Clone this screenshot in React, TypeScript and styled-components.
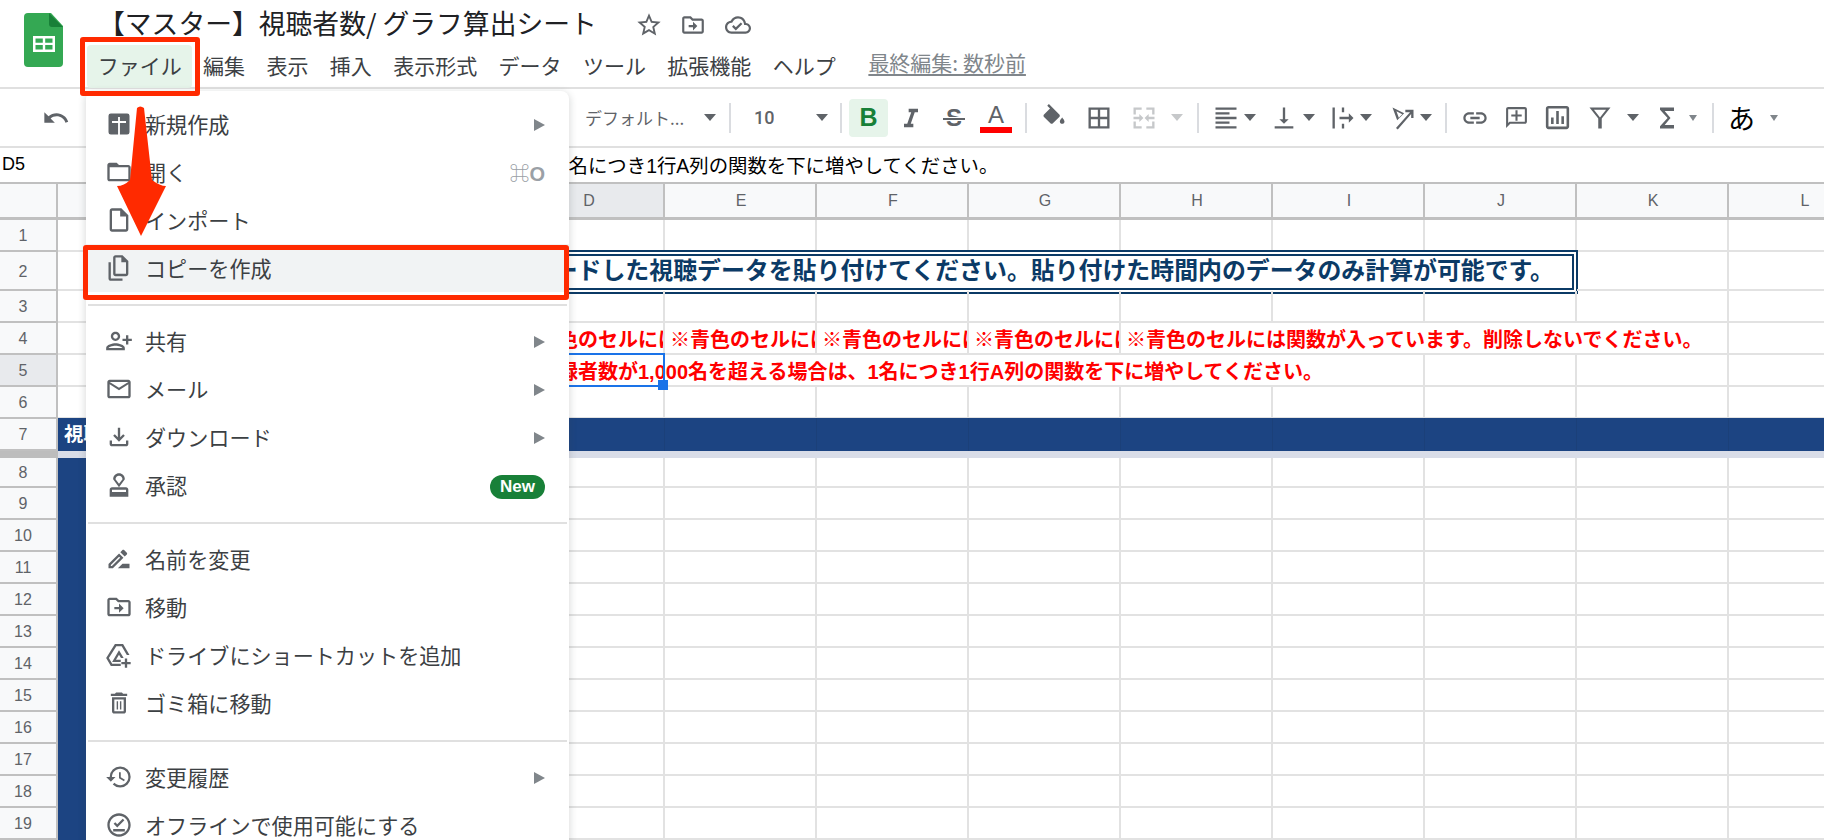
import React, { FC, ReactNode } from 'react';
import styled, { createGlobalStyle } from 'styled-components';

const jp = `"Noto Sans CJK JP", "Liberation Sans", sans-serif`;
const latin = `"Liberation Sans", "Noto Sans CJK JP", sans-serif`;

const GlobalStyle = createGlobalStyle`
    html, body {
        margin: 0;
        padding: 0;
        background: #fff;
    }
`;

const icons = {
    undo: 'M12.5 8c-2.65 0-5.05.99-6.9 2.6L2 7v9h9l-3.62-3.62c1.39-1.16 3.16-1.88 5.12-1.88 3.54 0 6.55 2.31 7.6 5.5l2.37-.78C21.08 11.03 17.15 8 12.5 8z',
    star: 'M22 9.24l-7.19-.62L12 2 9.19 8.63 2 9.24l5.46 4.73L5.82 21 12 17.27 18.18 21l-1.63-7.03L22 9.24zM12 15.4l-3.76 2.27 1-4.28-3.32-2.88 4.38-.38L12 6.1l1.71 4.04 4.38.38-3.32 2.88 1 4.28L12 15.4z',
    move: 'M20 6h-8l-2-2H4c-1.1 0-1.99.9-1.99 2L2 18c0 1.1.9 2 2 2h16c1.1 0 2-.9 2-2V8c0-1.1-.9-2-2-2zm0 12H4V6h5.17l2 2H20v10zm-8-4H8v-2h4V9l4 4-4 4v-3z',
    cloud: 'M19.35 10.04C18.67 6.59 15.64 4 12 4 9.11 4 6.6 5.64 5.35 8.04 2.34 8.36 0 10.91 0 14c0 3.31 2.69 6 6 6h13c2.76 0 5-2.24 5-5 0-2.64-2.05-4.78-4.65-4.96zM19 18H6c-2.21 0-4-1.79-4-4 0-2.05 1.53-3.76 3.56-3.97l1.07-.11.5-.95C8.08 7.14 9.94 6 12 6c2.62 0 4.88 1.86 5.39 4.43l.3 1.5 1.53.11c1.56.1 2.78 1.41 2.78 2.96 0 1.65-1.35 3-3 3zm-9-3.82l-2.09-2.09L6.5 13.5 10 17l6.01-6.01-1.41-1.41z',
    plusBox: 'M5 3h14a2 2 0 0 1 2 2v14a2 2 0 0 1-2 2H5a2 2 0 0 1-2-2V5a2 2 0 0 1 2-2zm6.200 3v3.500H6v1.600h5.200V21h1.600v-9.900H18V9.500h-5.200V6z',
    folder: 'M20 6h-8l-2-2H4c-1.1 0-1.99.9-1.99 2L2 18c0 1.1.9 2 2 2h16c1.1 0 2-.9 2-2V8c0-1.1-.9-2-2-2zm0 12H4V8h16v10z',
    file: 'M14 2H6c-1.1 0-1.99.9-1.99 2L4 20c0 1.1.89 2 1.99 2H18c1.1 0 2-.9 2-2V8l-6-6zM6 20V4h7v5h5v11H6z',
    copy: 'M15 1H9c-1.1 0-2 .9-2 2v14c0 1.1.9 2 2 2h9c1.1 0 2-.9 2-2V6l-5-5zM9 17V3h5v4h4v10H9zM3 7v14c0 1.1.9 2 2 2h10v-2H5V7H3z',
    share: 'M9 12c2.21 0 4-1.79 4-4s-1.79-4-4-4-4 1.79-4 4 1.79 4 4 4zm0-6c1.1 0 2 .9 2 2s-.9 2-2 2-2-.9-2-2 .9-2 2-2zm0 8c-2.67 0-8 1.34-8 4v2h16v-2c0-2.66-5.33-4-8-4zm6 4H3c.22-.72 3.31-2 6-2 2.7 0 5.8 1.29 6 2zm5-3v-3h3v-2h-3V7h-2v3h-3v2h3v3h2z',
    mail: 'M20 4H4c-1.1 0-1.99.9-1.99 2L2 18c0 1.1.9 2 2 2h16c1.1 0 2-.9 2-2V6c0-1.1-.9-2-2-2zm0 14H4V8l8 5 8-5v10zm-8-7L4 6h16l-8 5z',
    download: 'M18 15v3H6v-3H4v3c0 1.1.9 2 2 2h12c1.1 0 2-.9 2-2v-3h-2zm-1-4l-1.41-1.41L13 12.17V4h-2v8.17L8.41 9.59 7 11l5 5 5-5z',
    approve: 'M4 16v6h16v-6c0-1.1-.9-2-2-2H6c-1.1 0-2 .9-2 2zm14 2H6v-2h12v2zM12 2C9.24 2 7 4.24 7 7l5 7 5-7c0-2.76-2.24-5-5-5zm0 9L9 7c0-1.66 1.34-3 3-3s3 1.34 3 3l-3 4z',
    rename: 'M15 16l-4 4h10v-4h-6zM12.06 7.19L3 16.25V20h3.75l9.06-9.06-3.75-3.75zM5.92 18H5v-.92l7.06-7.06.92.92L5.92 18zM18.71 8.04c.39-.39.39-1.02 0-1.41l-2.34-2.34c-.39-.39-1.02-.39-1.41 0l-1.83 1.83 3.75 3.75 1.83-1.83z',
    drive: 'M8.500 2.500h7l5.500 9.500h-2.300L14.300 4.500H9.700L3.300 14.500l2.900 5h7.300v2H5L1 14.600 8.500 2.500zM12 8l4 6.500h-2.300L12 11.700l-2.600 4.300h4.100v2H6.100L12 8zm7 7v3h3v2h-3v3h-2v-3h-3v-2h3v-3h2z',
    trash: 'M6 19c0 1.1.9 2 2 2h8c1.1 0 2-.9 2-2V7H6v12zM8 9h8v10H8V9zm7.5-5l-1-1h-5l-1 1H5v2h14V4h-3.5zM10 10.5h1.2V17.500H10zm2.800 0H14V17.500h-1.200z',
    history: 'M13 3a9 9 0 0 0-9 9H1l3.89 3.89.07.14L9 12H6c0-3.87 3.13-7 7-7s7 3.13 7 7-3.13 7-7 7c-1.93 0-3.68-.79-4.94-2.06l-1.42 1.42A8.954 8.954 0 0 0 13 21a9 9 0 0 0 0-18zm-1 5v5l4.28 2.54.72-1.21-3.5-2.08V8H12z',
    offline: 'M12 2C6.490 2 2 6.490 2 12s4.490 10 10 10 10-4.490 10-10S17.510 2 12 2zm0 18c-4.410 0-8-3.590-8-8s3.590-8 8-8 8 3.590 8 8-3.590 8-8 8zM7 15.500h10v2H7v-2zm3.500-1.400L7.400 11l1.400-1.400 1.700 1.700 4.700-4.700 1.400 1.400-6.100 6.100z',
    italic: 'M10 4v3h2.210l-3.420 10H6v3h8v-3h-2.210l3.420-10H18V4z',
    fill: 'M16.560 8.940L7.620 0 6.210 1.410l2.380 2.380-5.150 5.150c-.590.590-.590 1.540 0 2.120l5.500 5.500c.290.290.680.440 1.060.440s.770-.150 1.060-.440l5.500-5.500c.590-.580.590-1.530 0-2.120zM19 11.500s-2 2.170-2 3.500c0 1.100.9 2 2 2s2-.9 2-2c0-1.330-2-3.500-2-3.500z',
    borders: 'M3 3v18h18V3H3zm8 16H5v-6h6v6zm0-8H5V5h6v6zm8 8h-6v-6h6v6zm0-8h-6V5h6v6z',
    merge: 'M3 3h7v2H5v4H3V3zm11 0h7v6h-2V5h-5V3zM3 15h2v4h5v2H3v-6zm16 0h2v6h-7v-2h5v-4zM3 11h5V8.500L11.500 12 8 15.500V13H3v-2zm18 2h-5v2.500L12.500 12 16 8.500V11h5v2z',
    align: 'M15 15H3v2h12v-2zm0-8H3v2h12V7zM3 13h18v-2H3v2zm0 8h18v-2H3v2zM3 3v2h18V3H3z',
    valign: 'M16 13h-3V3h-2v10H8l4 4 4-4zM4 19v2h16v-2H4z',
    wrap: 'M3 3h2v18H3V3zm8 0h2v4h-2V3zm0 14h2v4h-2v-4zm-2-6h8V8l4 4-4 4v-3H9v-2z',
    rotate: 'M3 3l10 5-6 6L3 3zm3.400 3.300l2 5.400 3-3-5-2.400zM6 20.500L18 7h-4V5h7v7h-2V8.500L7.500 21.800 6 20.500z',
    link: 'M3.900 12c0-1.710 1.390-3.100 3.100-3.100h4V7H7c-2.760 0-5 2.240-5 5s2.240 5 5 5h4v-1.900H7c-1.710 0-3.100-1.390-3.100-3.100zM8 13h8v-2H8v2zm9-6h-4v1.900h4c1.710 0 3.100 1.390 3.100 3.100s-1.390 3.100-3.100 3.100h-4V17h4c2.760 0 5-2.240 5-5s-2.240-5-5-5z',
    comment: 'M2 4c0-1.100.9-2 2-2h16c1.100 0 2 .9 2 2v12c0 1.100-.9 2-2 2H6l-4 4V4zm2 13.170L5.170 16H20V4H4v13.170zM11 5h2v4h4v2h-4v4h-2v-4H7V9h4V5z',
    chart: 'M19 3H5c-1.100 0-2 .9-2 2v14c0 1.100.9 2 2 2h14c1.100 0 2-.9 2-2V5c0-1.100-.9-2-2-2zm0 16H5V5h14v14zM7 12h2v5H7v-5zm4-5h2v10h-2V7zm4 4h2v6h-2v-6z',
    filter: 'M3 3h18l-7.500 9.500V21h-3v-8.500L3 3zm3.800 2l5.200 6.600L17.200 5H6.800z',
    sigma: 'M18 3H6v2l6.500 7L6 19v2h12v-3h-8l5-6-5-6h8V3z',
};

type IconName = keyof typeof icons;

const Svg = styled.svg<{ $ml?: number; $size?: number; $color?: string }>`
    flex: none;
    display: block;
    width: ${(p) => p.$size ?? 28}px;
    height: ${(p) => p.$size ?? 28}px;
    margin-left: ${(p) => p.$ml ?? 0}px;
    fill: ${(p) => p.$color ?? '#5f6368'};
`;

const Icon: FC<{ name: IconName; ml?: number; size?: number; color?: string }> = ({ name, ml, size, color }) => (
    <Svg viewBox="0 0 24 24" $ml={ml} $size={size} $color={color}>
        <path fillRule="evenodd" d={icons[name]} />
    </Svg>
);

const Page = styled.div`
    position: relative;
    width: 1824px;
    height: 840px;
    overflow: hidden;
    background: #fff;
    font-family: ${jp};
    color: #202124;
`;

const Header = styled.header`
    display: flex;
    box-sizing: border-box;
    height: 89px;
    padding: 13px 0 0 24px;
    border-bottom: 2px solid #e0e0e0;
`;
const LogoSvg = styled.svg`
    flex: none;
    width: 39px;
    height: 54px;
`;
const HeaderBody = styled.div`
    display: flex;
    flex-direction: column;
    margin-left: 24px;
`;
const TitleRow = styled.div`
    display: flex;
    align-items: center;
    height: 24px;
    padding-left: 11px;
`;
const Title = styled.div`
    width: 537px;
    margin-top: -4px;
    font-size: 26.8px;
    line-height: 24px;
    white-space: nowrap;
    color: #202124;
`;
const MenuBar = styled.nav`
    display: flex;
    align-items: center;
    height: 44px;
    margin-top: 8px;
`;
const MenuLabel = styled.div<{ $active?: boolean }>`
    padding: 0 10.7px;
    height: 43px;
    line-height: 41px;
    font-size: 21px;
    color: #3c4043;
    white-space: nowrap;
    border-radius: 4px;
    background: ${(p) => (p.$active ? '#e6f4ea' : 'transparent')};
`;
const LastEdit = styled.div`
    margin: -10px 0 0 22px;
    font-size: 21px;
    line-height: 24px;
    color: #80868b;
    text-decoration: underline;
    text-underline-offset: 3px;
    white-space: nowrap;
`;

const Toolbar = styled.div`
    display: flex;
    align-items: center;
    box-sizing: border-box;
    height: 59px;
    padding-left: 42px;
    border-bottom: 2px solid #e0e0e0;
`;
const Separator = styled.div<{ $ml: number }>`
    flex: none;
    width: 2px;
    height: 30px;
    margin-left: ${(p) => p.$ml}px;
    background: #dadce0;
`;
const Caret = styled.div<{ $ml: number; $small?: boolean; $light?: boolean }>`
    flex: none;
    width: 0;
    height: 0;
    margin-left: ${(p) => p.$ml}px;
    border-style: solid;
    border-color: ${(p) => (p.$light ? '#c6c8ca' : p.$small ? '#80868b' : '#5f6368')} transparent transparent;
    border-width: ${(p) => (p.$small ? '6px 4px 0' : '7px 6px 0')};
`;
const ToolText = styled.div<{ $ml: number; $w: number }>`
    flex: none;
    width: ${(p) => p.$w}px;
    margin-left: ${(p) => p.$ml}px;
    font-size: 17px;
    color: #5f6368;
    white-space: nowrap;
    overflow: hidden;
`;
const FontSizeText = styled(ToolText)`
    font-family: Roboto, ${latin};
    font-size: 18px;
    font-weight: 500;
    color: #5f6368;
`;
const BoldButton = styled.div`
    flex: none;
    display: flex;
    align-items: center;
    justify-content: center;
    width: 39px;
    height: 38px;
    margin-left: 7px;
    border-radius: 4px;
    background: #e6f4ea;
    font-family: ${latin};
    font-size: 25px;
    font-weight: bold;
    color: #188038;
`;
const StrikeGlyph = styled.div`
    position: relative;
    flex: none;
    width: 28px;
    margin-left: 15px;
    text-align: center;
    font-family: ${latin};
    font-size: 24px;
    line-height: 28px;
    font-weight: bold;
    color: #5f6368;
    &::after {
        content: '';
        position: absolute;
        left: 3px;
        right: 3px;
        top: 14px;
        height: 2px;
        background: #5f6368;
        box-shadow: 0 0 0 1px #fff;
    }
`;
const ColorGlyph = styled.div`
    flex: none;
    width: 32px;
    margin-left: 12px;
    text-align: center;
    font-family: ${latin};
    font-size: 24px;
    line-height: 24px;
    color: #5f6368;
    border-bottom: 6px solid #ff0000;
`;
const KanaGlyph = styled.div`
    flex: none;
    width: 27px;
    margin-left: 14px;
    font-size: 27px;
    line-height: 30px;
    color: #000;
`;

const FormulaBar = styled.div`
    display: flex;
    align-items: center;
    box-sizing: border-box;
    height: 36px;
    border-bottom: 2px solid #c0c0c0;
    padding: 0 0 2px 2px;
    color: #000;
    white-space: nowrap;
`;
const NameBox = styled.div`
    width: 217px;
    font-family: ${latin};
    font-size: 18px;
`;
const FormulaText = styled.div`
    font-family: ${latin};
    font-size: 19.4px;
`;

const Grid = styled.div`
    display: grid;
    grid-template-columns: 58px 151px repeat(11, 152px);
    grid-template-rows: 36px 32px 39px repeat(5, 32px) 7px 30px repeat(11, 32px);
    font-family: ${latin};
`;
const Corner = styled.div`
    box-sizing: border-box;
    background: #f8f9fa;
    border-right: 2px solid #c0c0c0;
    border-bottom: 3px solid #c0c0c0;
`;
const ColHead = styled.div<{ $active?: boolean }>`
    display: flex;
    align-items: center;
    justify-content: center;
    box-sizing: border-box;
    padding-left: 2px;
    background: ${(p) => (p.$active ? '#e8eaed' : '#f8f9fa')};
    border-right: 2px solid #c0c0c0;
    border-bottom: 3px solid #c0c0c0;
    font-size: 16px;
    color: #5f6368;
`;
const RowHead = styled.div<{ $active?: boolean }>`
    display: flex;
    align-items: center;
    justify-content: center;
    box-sizing: border-box;
    padding: 2px 10px 0 0;
    background: ${(p) => (p.$active ? '#e8eaed' : '#f8f9fa')};
    border-right: 2px solid #c0c0c0;
    border-bottom: 2px solid #c0c0c0;
    font-size: 16px;
    color: #5f6368;
`;
const Cell = styled.div`
    box-sizing: border-box;
    border-right: 2px solid #e2e2e2;
    border-bottom: 2px solid #e2e2e2;
`;
const TitleCell = styled.div`
    grid-column: span 9;
    box-sizing: border-box;
    margin: -2px -1px -3px 0;
    border: 6px double #0b3a66;
    padding-right: 18px;
    text-align: right;
    font-family: ${jp};
    font-size: 23.9px;
    font-weight: bold;
    line-height: 26px;
    color: #0b3a66;
    white-space: nowrap;
    overflow: hidden;
`;
const NoteCell = styled(Cell)<{ $span?: number }>`
    grid-column: span ${(p) => p.$span ?? 1};
    position: relative;
    padding-left: 5px;
    font-size: 20px;
    font-weight: bold;
    line-height: 34px;
    color: #ff0000;
    white-space: nowrap;
    overflow: ${(p) => (p.$span ? 'visible' : 'hidden')};
`;
const Selection = styled.div`
    position: absolute;
    left: -2px;
    top: -2px;
    width: 154px;
    height: 34px;
    box-sizing: border-box;
    border: 2.500px solid #1a73e8;
`;
const FillHandle = styled.div`
    position: absolute;
    right: -5px;
    bottom: -5px;
    width: 10px;
    height: 10px;
    background: #1a73e8;
`;
const BandCell = styled.div`
    box-sizing: border-box;
    margin-top: -1px;
    padding-left: 6px;
    border-right: 1px solid #1b4079;
    background: #1c4482;
    font-size: 19.4px;
    font-weight: bold;
    line-height: 33px;
    color: #fff;
    white-space: nowrap;
    overflow: hidden;
`;
const FreezeHead = styled.div`
    background: #bdbdbd;
`;
const FreezeBar = styled.div`
    grid-column: span 12;
    background: #d9dde8;
`;
const NavyCell = styled.div`
    background: #1c4482;
`;

const FileMenu = styled.div`
    position: absolute;
    left: 86px;
    top: 91px;
    box-sizing: border-box;
    width: 483px;
    height: 770px;
    padding-top: 9px;
    border-radius: 8px;
    background: #fff;
    box-shadow: 0 2px 6px 2px rgba(60, 64, 67, 0.15);
`;
const MenuItem = styled.div<{ $hover?: boolean }>`
    display: flex;
    align-items: center;
    gap: 12px;
    height: 48px;
    padding: 0 24px 0 19px;
    background: ${(p) => (p.$hover ? '#f1f3f4' : 'transparent')};
    font-size: 21.1px;
    color: #3c4043;
    white-space: nowrap;
`;
const ItemLabel = styled.span`
    flex: 1;
`;
const Submenu = styled.span`
    width: 0;
    height: 0;
    margin-top: 2px;
    border-style: solid;
    border-color: transparent transparent transparent #80868b;
    border-width: 6.500px 0 6.500px 11px;
`;
const Shortcut = styled.span`
    font-family: ${latin};
    font-size: 20px;
    color: #9aa0a6;
    b {
        font-weight: bold;
    }
`;
const NewBadge = styled.span`
    width: 55px;
    height: 24px;
    margin-top: 3px;
    border-radius: 12px;
    background: #188038;
    font-family: ${latin};
    font-size: 17px;
    font-weight: bold;
    line-height: 24px;
    text-align: center;
    color: #fff;
`;
const Divider = styled.hr<{ $extra?: number }>`
    height: 2px;
    margin: ${(p) => 12 + (p.$extra ?? 0)}px 2px 11px;
    border: 0;
    background: #e0e0e0;
`;

const Callout = styled.div<{ $x: number; $y: number; $w: number; $h: number }>`
    position: absolute;
    left: ${(p) => p.$x}px;
    top: ${(p) => p.$y}px;
    width: ${(p) => p.$w}px;
    height: ${(p) => p.$h}px;
    box-sizing: border-box;
    border: 5.500px solid #ff2a00;
    border-radius: 3px;
`;
const ArrowSvg = styled.svg`
    position: absolute;
    left: 110px;
    top: 100px;
    width: 70px;
    height: 140px;
`;

const columns = ['A', 'B', 'C', 'D', 'E', 'F', 'G', 'H', 'I', 'J', 'K', 'L'];
const noteText = '※青色のセルには関数が入っています。削除しないでください。';
const formula = '※登録者数が1,000名を超える場合は、1名につき1行A列の関数を下に増やしてください。';

const blank = (n: number, prefix: string) =>
    Array.from({ length: n }, (_, i) => <Cell key={`${prefix}-${i}`} />);

const Item: FC<{ icon: IconName; label: string; sub?: boolean; hover?: boolean; right?: ReactNode }> = ({
    icon,
    label,
    sub,
    hover,
    right,
}) => (
    <MenuItem $hover={hover}>
        <Icon name={icon} />
        <ItemLabel>{label}</ItemLabel>
        {sub && <Submenu />}
        {right}
    </MenuItem>
);

export default function App() {
    return (
        <Page>
            <GlobalStyle />
            <Header>
                <LogoSvg viewBox="0 0 39 54">
                    <path d="M4 0h23l12 13v37a4 4 0 0 1-4 4H4a4 4 0 0 1-4-4V4a4 4 0 0 1 4-4z" fill="#34a853" />
                    <path d="M25 0l14 14H28a3 3 0 0 1-3-3z" fill="#188038" />
                    <path d="M9 23h22v16H9zm2.500 2.500v4.200h7.300v-4.200zm9.700 0v4.200h7.300v-4.200zm-9.700 6.600v4.400h7.300v-4.400zm9.700 0v4.400h7.300v-4.400z" fill="#fff" fillRule="evenodd" />
                </LogoSvg>
                <HeaderBody>
                    <TitleRow>
                        <Title>【マスター】視聴者数/ グラフ算出シート</Title>
                        <Icon name="star" />
                        <Icon name="move" ml={17} size={26} />
                        <Icon name="cloud" ml={19} size={26} />
                    </TitleRow>
                    <MenuBar>
                        <MenuLabel $active>ファイル</MenuLabel>
                        <MenuLabel>編集</MenuLabel>
                        <MenuLabel>表示</MenuLabel>
                        <MenuLabel>挿入</MenuLabel>
                        <MenuLabel>表示形式</MenuLabel>
                        <MenuLabel>データ</MenuLabel>
                        <MenuLabel>ツール</MenuLabel>
                        <MenuLabel>拡張機能</MenuLabel>
                        <MenuLabel>ヘルプ</MenuLabel>
                        <LastEdit>最終編集: 数秒前</LastEdit>
                    </MenuBar>
                </HeaderBody>
            </Header>

            <Toolbar>
                <Icon name="undo" />
                <ToolText $ml={515} $w={105}>デフォルト...</ToolText>
                <Caret $ml={14} />
                <Separator $ml={13} />
                <FontSizeText $ml={23} $w={20}>10</FontSizeText>
                <Caret $ml={42} />
                <Separator $ml={12} />
                <BoldButton>B</BoldButton>
                <Icon name="italic" ml={9} />
                <StrikeGlyph>S</StrikeGlyph>
                <ColorGlyph>A</ColorGlyph>
                <Separator $ml={13} />
                <Icon name="fill" ml={13} />
                <Icon name="borders" ml={17} />
                <Icon name="merge" ml={17} color="#c6c8ca" />
                <Caret $ml={13} $light />
                <Separator $ml={14} />
                <Icon name="align" ml={13} />
                <Caret $ml={4} />
                <Icon name="valign" ml={14} />
                <Caret $ml={5} />
                <Icon name="wrap" ml={14} />
                <Caret $ml={3} />
                <Icon name="rotate" ml={17} />
                <Caret $ml={3} />
                <Separator $ml={13} />
                <Icon name="link" ml={14} />
                <Icon name="comment" ml={15} size={25} />
                <Icon name="chart" ml={13} size={31} />
                <Icon name="filter" ml={13} />
                <Caret $ml={13} />
                <Icon name="sigma" ml={14} />
                <Caret $ml={8} $small />
                <Separator $ml={15} />
                <KanaGlyph>あ</KanaGlyph>
                <Caret $ml={15} $small />
            </Toolbar>

            <FormulaBar>
                <NameBox>D5</NameBox>
                <FormulaText>{formula}</FormulaText>
            </FormulaBar>

            <Grid>
                <Corner />
                {columns.map((c) => (
                    <ColHead key={c} $active={c === 'D'}>{c}</ColHead>
                ))}

                <RowHead>1</RowHead>
                {blank(12, 'r1')}

                <RowHead>2</RowHead>
                <Cell />
                <TitleCell>ダウンロードした視聴データを貼り付けてください。貼り付けた時間内のデータのみ計算が可能です。</TitleCell>
                {blank(2, 'r2')}

                <RowHead>3</RowHead>
                {blank(12, 'r3')}

                <RowHead>4</RowHead>
                {blank(3, 'r4')}
                <NoteCell>{noteText}</NoteCell>
                <NoteCell>{noteText}</NoteCell>
                <NoteCell>{noteText}</NoteCell>
                <NoteCell>{noteText}</NoteCell>
                <NoteCell $span={4}>{noteText}</NoteCell>
                <Cell />

                <RowHead $active>5</RowHead>
                {blank(3, 'r5')}
                <NoteCell $span={6}>
                    <Selection>
                        <FillHandle />
                    </Selection>
                    {formula}
                </NoteCell>
                {blank(3, 'r5b')}

                <RowHead>6</RowHead>
                {blank(12, 'r6')}

                <RowHead>7</RowHead>
                {columns.map((c, i) => (
                    <BandCell key={c}>{i === 0 ? '視聴データ' : ''}</BandCell>
                ))}

                <FreezeHead />
                <FreezeBar />

                {Array.from({ length: 12 }, (_, i) => (
                    <React.Fragment key={i}>
                        <RowHead>{i + 8}</RowHead>
                        <NavyCell />
                        {blank(11, `r${i + 8}`)}
                    </React.Fragment>
                ))}
            </Grid>

            <FileMenu>
                <Item icon="plusBox" label="新規作成" sub />
                <Item icon="folder" label="開く" right={<Shortcut>⌘<b>O</b></Shortcut>} />
                <Item icon="file" label="インポート" />
                <Item icon="copy" label="コピーを作成" hover />
                <Divider />
                <Item icon="share" label="共有" sub />
                <Item icon="mail" label="メール" sub />
                <Item icon="download" label="ダウンロード" sub />
                <Item icon="approve" label="承認" right={<NewBadge>New</NewBadge>} />
                <Divider $extra={1} />
                <Item icon="rename" label="名前を変更" />
                <Item icon="move" label="移動" />
                <Item icon="drive" label="ドライブにショートカットを追加" />
                <Item icon="trash" label="ゴミ箱に移動" />
                <Divider $extra={1} />
                <Item icon="history" label="変更履歴" sub />
                <Item icon="offline" label="オフラインで使用可能にする" />
            </FileMenu>

            <Callout $x={80} $y={37} $w={120} $h={59} />
            <Callout $x={83} $y={245} $w={486} $h={55} />
            <ArrowSvg viewBox="110 100 70 140">
                <path d="M137 108Q140 105 144 108L152 180Q160 186 166 186L141 236L117 186Q124 186 130 180Z" fill="#ff2a00" />
            </ArrowSvg>
        </Page>
    );
}
